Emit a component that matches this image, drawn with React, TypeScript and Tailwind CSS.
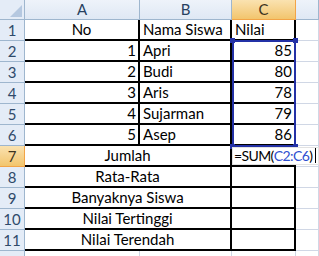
import React from "react";

const font = { fontFamily: "Lato, 'Open Sans', sans-serif" };

const rows = [
  { no: "1", nama: "Apri", nilai: "85" },
  { no: "2", nama: "Budi", nilai: "80" },
  { no: "3", nama: "Aris", nilai: "78" },
  { no: "4", nama: "Sujarman", nilai: "79" },
  { no: "5", nama: "Asep", nilai: "86" },
];

const summary = ["Jumlah", "Rata-Rata", "Banyaknya Siswa", "Nilai Tertinggi", "Nilai Terendah"];

const ColHead = ({ label, active }: { label: string; active?: boolean }) => (
  <div
    className={`flex items-center justify-center border-r border-b text-[15px] ${
      active
        ? "bg-gradient-to-b from-[#fae2b0] to-[#f2c56c] border-[#f2a447] text-[#3e3420]"
        : "bg-gradient-to-b from-[#eef3fa] to-[#dfe8f4] border-[#9eb6ce] text-[#27415f]"
    }`}
  >
    {label}
  </div>
);

const RowHead = ({ n, active }: { n: number; active?: boolean }) => (
  <div
    className={`flex items-center justify-center border-r border-b text-[15px] ${
      active
        ? "bg-gradient-to-b from-[#fae2b0] to-[#f2c56c] border-[#f2a447] text-[#3e3420]"
        : "bg-[#e4ecf7] border-[#9eb6ce] text-[#2f4a6a]"
    }`}
  >
    {n}
  </div>
);

// empty cell, plain gridline
const Grid = () => <div className="border-r border-b border-[#d0d7e5] bg-white" />;

const Cell = ({
  children,
  align = "left",
  className = "",
}: {
  children?: React.ReactNode;
  align?: "left" | "right" | "center";
  className?: string;
}) => (
  <div
    className={`flex items-end pb-[1px] bg-white border-r-2 border-b-2 border-black text-[15px] leading-[18px] text-black whitespace-nowrap overflow-visible ${
      align === "right" ? "justify-end pr-[2px]" : align === "center" ? "justify-center" : "justify-start pl-[3px]"
    } ${className}`}
  >
    {children}
  </div>
);

export default function App() {
  return (
    <div className="relative w-[319px] h-[256px] overflow-hidden bg-white" style={font}>
      <div className="grid grid-cols-[25px_115px_92px_64px_23px] grid-rows-[20px_repeat(12,21px)]">
        {/* header */}
        <div className="relative bg-[#e4ecf7] border-r border-b border-[#9eb6ce]">
          <svg className="absolute right-[2px] bottom-[2px]" width="12" height="12" viewBox="0 0 12 12">
            <polygon points="12,0 12,12 0,12" fill="#b5c8e0" />
          </svg>
        </div>
        <ColHead label="A" />
        <ColHead label="B" />
        <ColHead label="C" active />
        <ColHead label="" />

        {/* row 1 */}
        <RowHead n={1} />
        <Cell align="center">No</Cell>
        <Cell>Nama Siswa</Cell>
        <Cell>Nilai</Cell>
        <Grid />

        {rows.map((r, i) => (
          <React.Fragment key={r.no}>
            <RowHead n={i + 2} />
            <Cell align="right">{r.no}</Cell>
            <Cell>{r.nama}</Cell>
            <Cell align="right">{r.nilai}</Cell>
            <Grid />
          </React.Fragment>
        ))}

        {summary.map((s, i) => (
          <React.Fragment key={s}>
            <RowHead n={i + 7} active={i === 0} />
            <Cell align="center" className="col-span-2">
              {s}
            </Cell>
            {i === 0 ? (
              <div className="relative bg-white border-b-2 border-black">
                <div className="absolute left-0 top-[1px] z-10 flex h-[18px] w-[87px] items-end bg-white border border-[#e2e2e2] pl-[1px] text-[14px] leading-[17px] tracking-[-0.6px] text-black whitespace-nowrap">
                  =SUM(<span className="text-[#2f4fcf]">C2:C6</span>)
                  <span className="ml-[3px] mb-[1px] h-[15px] w-px bg-black" />
                </div>
              </div>
            ) : (
              <Cell />
            )}
            <Grid />
          </React.Fragment>
        ))}

        {/* row 12 */}
        <RowHead n={12} />
        <Grid />
        <Grid />
        <Grid />
        <Grid />
      </div>

      {/* range selection C2:C6 */}
      <div className="pointer-events-none absolute left-[232px] top-[40px] h-[107px] w-[64px] border-2 border-[#2331a6]" />
      <div className="absolute left-[230px] top-[38px] h-[5px] w-[5px] bg-[#2331a6]" />
      <div className="absolute left-[293px] top-[38px] h-[5px] w-[5px] bg-[#2331a6]" />
      <div className="absolute left-[230px] top-[144px] h-[5px] w-[5px] bg-[#2331a6]" />
      <div className="absolute left-[293px] top-[144px] h-[5px] w-[5px] bg-[#2331a6]" />
    </div>
  );
}
